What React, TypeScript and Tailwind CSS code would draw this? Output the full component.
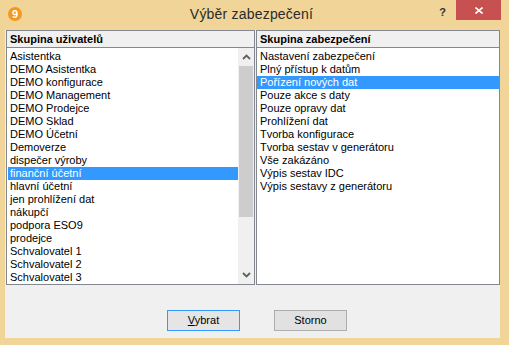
import React from 'react';

const users = [
  'Asistentka',
  'DEMO Asistentka',
  'DEMO konfigurace',
  'DEMO Management',
  'DEMO Prodejce',
  'DEMO Sklad',
  'DEMO Účetní',
  'Demoverze',
  'dispečer výroby',
  'finanční účetní',
  'hlavní účetní',
  'jen prohlížení dat',
  'nákupčí',
  'podpora ESO9',
  'prodejce',
  'Schvalovatel 1',
  'Schvalovatel 2',
  'Schvalovatel 3',
];

const rights = [
  'Nastavení zabezpečení',
  'Plný přístup k datům',
  'Pořízení nových dat',
  'Pouze akce s daty',
  'Pouze opravy dat',
  'Prohlížení dat',
  'Tvorba konfigurace',
  'Tvorba sestav v generátoru',
  'Vše zakázáno',
  'Výpis sestav IDC',
  'Výpis sestavy z generátoru',
];

function Chevron({ up }: { up?: boolean }) {
  return (
    <svg width="9" height="6" viewBox="0 0 9 6">
      <path
        d={up ? 'M1 5 L4.5 1.5 L8 5' : 'M1 1 L4.5 4.5 L8 1'}
        fill="none"
        stroke="#606060"
        strokeWidth="1.8"
      />
    </svg>
  );
}

function Row({ text, selected, pad }: { text: string; selected?: boolean; pad: string }) {
  return (
    <div
      className={`h-[13px] leading-[13px] whitespace-nowrap ${pad} ${
        selected ? 'bg-[#3399ff] text-white' : 'text-black'
      }`}
    >
      {text}
    </div>
  );
}

export default function App() {
  return (
    <div
      className="w-[509px] h-[345px] bg-[#f0d498] flex flex-col overflow-hidden"
      style={{ fontFamily: '"Liberation Sans", Arial, sans-serif' }}
    >
      {/* title bar */}
      <div className="h-[29px] grid grid-cols-[1fr_auto_1fr] items-start">
        <div className="pl-[8px] pt-[7px]">
          <div className="w-[14px] h-[14px] rounded-full bg-[#f39a1e] text-white text-[11px] font-bold leading-[14px] text-center">
            9
          </div>
        </div>
        <div className="pt-[5px] pr-[6px] text-[14px] leading-[18px] text-[#2b2b2b] tracking-[0.2px]">
          Výběr zabezpečení
        </div>
        <div className="flex justify-end items-start pr-[8px]">
          <div className="pt-[6px] mr-[10px] text-[11px] font-bold leading-[12px] text-[#333]">?</div>
          <div className="w-[45px] h-[20px] bg-[#c75050] flex items-center justify-center">
            <svg width="8" height="7" viewBox="0 0 8 7">
              <path d="M0.5 0.5 L7.5 6.5 M7.5 0.5 L0.5 6.5" stroke="#fff" strokeWidth="1.6" />
            </svg>
          </div>
        </div>
      </div>

      {/* content */}
      <div className="ml-[5px] w-[495px] h-[309px] bg-[#f0f0f0] border-t border-[#e8d7a8] flex flex-col text-[11px]">
        <div className="flex pl-[1px] pt-[0px] gap-[1px]">
          {/* users */}
          <div className="w-[249px] h-[255px] border border-[#828790] bg-white flex flex-col">
            <div className="h-[17px] bg-[#f0f0f0] border-b border-[#828790] pl-[3px] font-bold leading-[16px]">
              Skupina uživatelů
            </div>
            <div className="flex flex-1">
              <div className="flex-1 pl-[1px] pt-[2px]">
                {users.map((u) => (
                  <Row key={u} text={u} selected={u === 'finanční účetní'} pad="pl-[2px]" />
                ))}
              </div>
              <div className="w-[16px] bg-[#f0f0f0] flex flex-col">
                <div className="h-[18px] flex items-center justify-center">
                  <Chevron up />
                </div>
                <div className="h-[151px] mx-[1px] bg-[#cdcdcd]" />
                <div className="flex-1" />
                <div className="h-[18px] flex items-center justify-center">
                  <Chevron />
                </div>
              </div>
            </div>
          </div>

          {/* rights */}
          <div className="w-[244px] h-[255px] border border-[#828790] bg-white flex flex-col">
            <div className="h-[17px] bg-[#f0f0f0] border-b border-[#828790] pl-[3px] font-bold leading-[16px]">
              Skupina zabezpečení
            </div>
            <div className="pt-[2px]">
              {rights.map((r) => (
                <Row key={r} text={r} selected={r === 'Pořízení nových dat'} pad="pl-[3px]" />
              ))}
            </div>
          </div>
        </div>

        <div className="flex pl-[162px] pt-[25px] gap-[34px]">
          <button className="w-[73px] h-[21px] border border-[#3399ff] bg-[#e5e5e5] text-black text-[11px] leading-[19px]">
            <span className="underline">V</span>ybrat
          </button>
          <button className="w-[73px] h-[21px] border border-[#adadad] bg-[#e1e1e1] text-black text-[11px] leading-[19px]">
            Storno
          </button>
        </div>
      </div>
    </div>
  );
}
